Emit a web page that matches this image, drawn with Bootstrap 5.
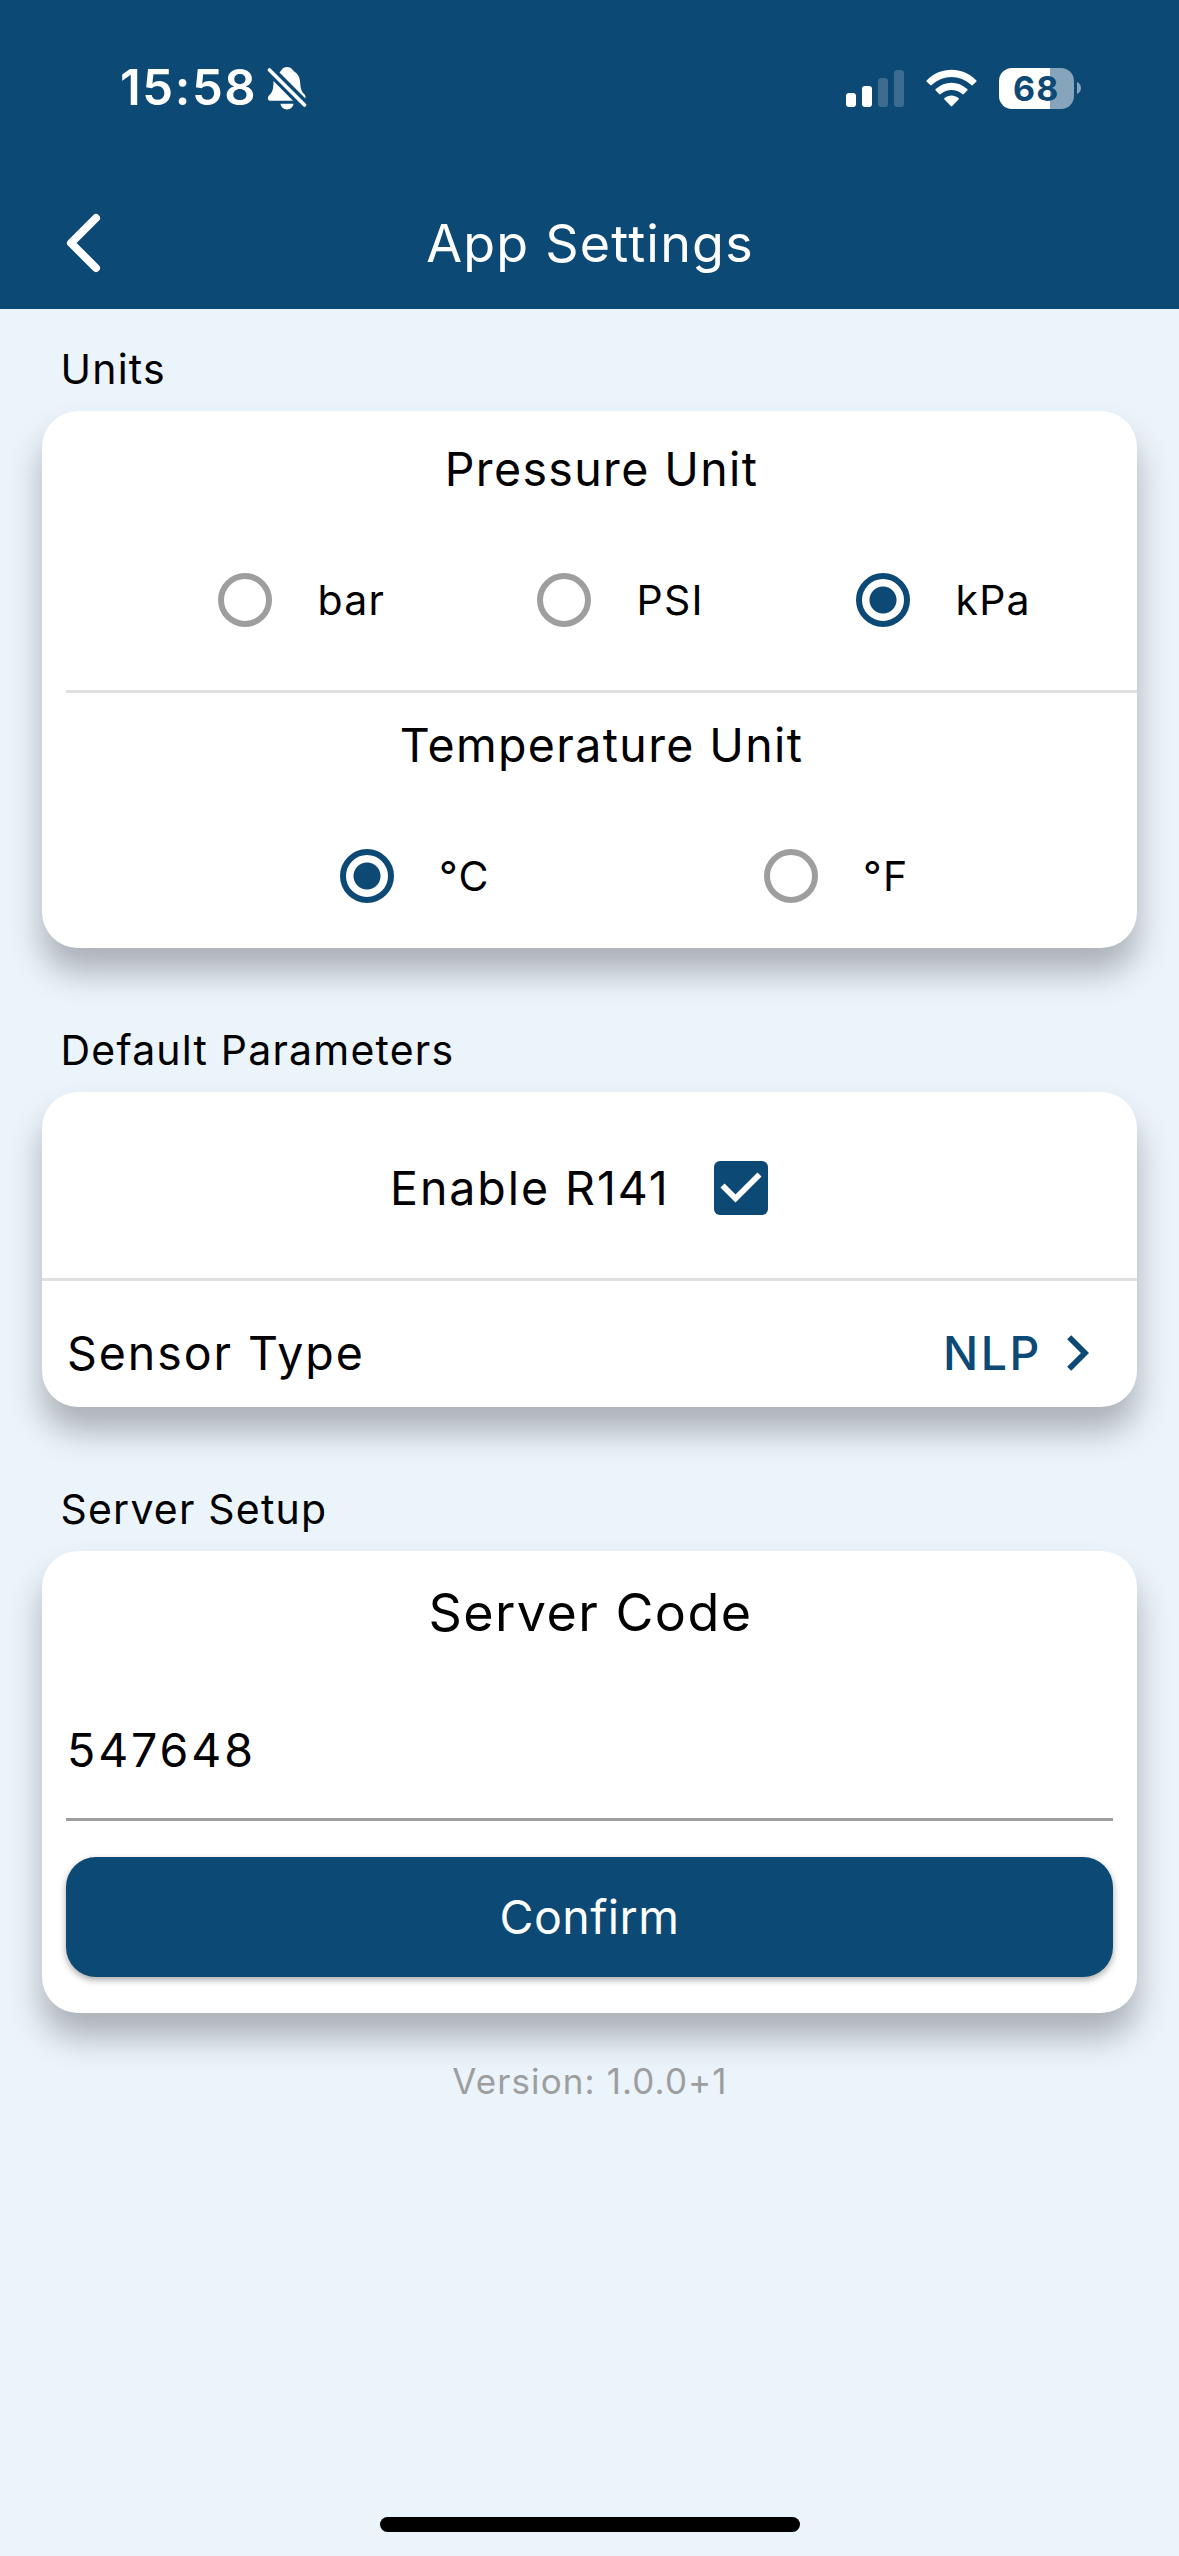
<!DOCTYPE html>
<html lang="en">
<head>
<meta charset="utf-8">
<meta name="viewport" content="width=device-width, initial-scale=1">
<title>App Settings</title>
<link href="https://cdn.jsdelivr.net/npm/bootstrap@5.3.0/dist/css/bootstrap.min.css" rel="stylesheet">
<style>
  :root { --brand: #0c4975; --line: #e0e0e0; --muted: #9e9e9e; }
  body { background: #ebf3fb; color: #000; font-family: Inter, "Liberation Sans", sans-serif; font-size: 41px; line-height: 1.2; min-height: 2556px; }
  svg { display: block; flex: none; }
  .app-head { background: var(--brand); height: 309px; }
  .status { height: 176px; padding: 0 98px 0 120px; }
  .clock { font-size: 49px; font-weight: 600; letter-spacing: 1.58px; padding-top: 1px; }
  .silent-icon { margin-left: 10px; }
  .wifi-icon { margin-left: 22px; }
  .battery { width: 75px; height: 41px; border-radius: 13px; background: linear-gradient(90deg, #fff 51px, #86a4ba 51px); color: var(--brand); font-size: 34px; font-weight: 700; letter-spacing: 1.2px; padding-left: 14px; line-height: 41px; margin-left: 22px; }
  .battery-tip { margin-left: 2px; margin-right: -2px; }
  .nav-row { height: 133px; padding-top: 4px; }
  .back-btn { left: 66px; top: 35px; }
  .nav-title { font-size: 52px; font-weight: 400; letter-spacing: 1.2px; padding-left: 1px; }
  .section-label { font-size: 41px; font-weight: 400; line-height: 84px; margin: 60px 0 0 60.5px; letter-spacing: 1.2px; }
  .section-label.top-label { margin-top: 18px; }
  .panel { margin: 0 42px; border: 0; border-radius: 36px; box-shadow: 0 24px 33px rgba(0,0,0,.275); color: #000; background: #fff; }
  .group-title { font-size: 46.5px; font-weight: 400; letter-spacing: 1.38px; margin: 0; padding-left: 24px; text-align: center; }
  .title-pressure { line-height: 116px; }
  .title-temperature { line-height: 104px; }
  .option { gap: 45.5px; letter-spacing: 1.2px; flex: none; }
  .option span { padding-top: 2px; }
  .option .form-check-input { width: 54px; height: 54px; margin: 0; border: 6px solid var(--muted); background-color: #fff; flex: none; }
  .option .form-check-input:checked { border-color: var(--brand); background-image: radial-gradient(circle, var(--brand) 13px, transparent 14px); background-size: 100% 100%; background-origin: border-box; }
  .pressure { height: 146px; padding-left: 176px; margin-bottom: 17px; }
  .pressure .option { width: 319px; }
  .temperature { height: 144px; padding-left: 297.5px; margin-top: 7px; }
  .temperature .option { width: 424px; }
  .divider { height: 3px; background: var(--line); }
  .divider-inset { margin-left: 24px; }
  .enable-row { height: 186px; padding: 6px 0 0 348px; font-size: 46.5px; letter-spacing: 1.94px; gap: 44.5px; }
  .enable-row span { padding-top: 2px; }
  .sensor-row { height: 126px; padding: 19px 48px 0 25px; font-size: 46.5px; letter-spacing: 1.95px; }
  .sensor-value { color: var(--brand); font-weight: 500; letter-spacing: 2.6px; gap: 25px; }
  .server-title { font-size: 52px; font-weight: 400; letter-spacing: 1.45px; line-height: 124px; margin: 0; padding-left: 2px; }
  .code-input, .code-input:focus { height: 146px; border: 0; border-bottom: 3px solid var(--muted); border-radius: 0; margin: 0 24px; width: auto; padding: 6px 0 0 1px; font-size: 46.5px; letter-spacing: 2.9px; color: #000; background: transparent; box-shadow: none; }
  .confirm, .confirm:hover { height: 120px; margin: 36px 24px; border: 0; border-radius: 30px; background: var(--brand); color: #fff; font-size: 46.5px; letter-spacing: .43px; padding: 2px 0 0; box-shadow: 0 3px 7px rgba(0,0,0,.34); }
  .version { margin-top: 47px; line-height: 42px; font-size: 35px; letter-spacing: 1.1px; color: var(--muted); padding-left: 1px; }
  .home-bar { width: 420px; height: 15px; border-radius: 8px; background: #000; margin-bottom: 24px; }
</style>
</head>
<body class="d-flex flex-column">
<header class="app-head text-white">
  <div class="status d-flex align-items-center">
    <span class="clock">15:58</span>
    <svg class="silent-icon" width="40" height="44" viewBox="0 0 40 44" fill="#fff">
      <path d="M12.5 6.500C14.500 5 15 1 20 1c5 0 5.500 3.500 8.500 5.500C32 9 33 13 33.300 18c.2 5 1.500 8 4.500 10.800.8.900.7 1.900.6 3.700z"/>
      <path d="M6.500 15L26 34.800H3.500C.5 34.800.2 31.500 2 29.500 4.500 27 6.500 25.500 6.500 15z"/>
      <path d="M13.500 37.800h13c-.5 3.300-3 5.700-6.500 5.700s-6-2.400-6.500-5.700z"/>
      <path d="M2.500 4L37.500 39" stroke="#fff" stroke-width="3.600" stroke-linecap="round"/>
    </svg>
    <svg class="ms-auto" width="58" height="38" viewBox="0 0 58 38" fill="#fff">
      <rect y="24" width="10" height="14" rx="3"/><rect x="16" y="17" width="10" height="21" rx="3"/>
      <g fill-opacity=".2"><rect x="32" y="9" width="10" height="29" rx="3"/><rect x="48" y="1" width="10" height="37" rx="3"/></g>
    </svg>
    <svg class="wifi-icon" width="51" height="38" viewBox="0 0 51 38" fill="#fff">
      <path d="M.8 11.200C15-2.600 36-2.600 50.200 11.200c.5.500.5 1 0 1.500l-3.400 3.400c-.5.500-1 .5-1.500 0-11.500-10.800-28.100-10.800-39.600 0-.5.500-1 .5-1.500 0L.8 12.700c-.5-.5-.5-1 0-1.500z"/>
      <path d="M9.700 20.100c9-8.600 22.600-8.600 31.600 0 .5.500.5 1 0 1.500l-3.500 3.500c-.5.500-1 .5-1.500 0-6.300-5.600-15.300-5.600-21.600 0-.5.500-1 .5-1.500 0l-3.500-3.500c-.5-.5-.5-1 0-1.500z"/>
      <path d="M18.500 29c4.100-3.400 9.900-3.400 14 0 .5.500.5 1 0 1.500l-6.300 6.500c-.5.500-.9.500-1.400 0L18.500 30.500c-.5-.5-.5-1 0-1.500z"/>
    </svg>
    <span class="battery">68</span>
    <svg class="battery-tip" width="7" height="14" viewBox="0 0 7 14"><path d="M1 1c5.300 2 5.300 10 0 12z" fill="#86a4ba"/></svg>
  </div>
  <div class="nav-row position-relative d-flex align-items-center justify-content-center">
    <a class="back-btn position-absolute" href="#" aria-label="Back"><svg width="36" height="64" viewBox="0 0 36 64"><path d="M30 7L5 32L30 57" fill="none" stroke="#fff" stroke-width="8" stroke-linecap="round" stroke-linejoin="round"/></svg></a>
    <h1 class="nav-title mb-0">App Settings</h1>
  </div>
</header>

<main class="flex-grow-1">
  <h2 class="section-label mb-0 top-label">Units</h2>
  <section class="card panel">
    <h3 class="group-title title-pressure">Pressure Unit</h3>
    <div class="pressure d-flex align-items-center">
      <label class="option d-flex align-items-center"><input class="form-check-input" type="radio" name="pressure"><span>bar</span></label>
      <label class="option d-flex align-items-center"><input class="form-check-input" type="radio" name="pressure"><span>PSI</span></label>
      <label class="option d-flex align-items-center w-auto"><input class="form-check-input" type="radio" name="pressure" checked><span>kPa</span></label>
    </div>
    <div class="divider divider-inset"></div>
    <h3 class="group-title title-temperature">Temperature Unit</h3>
    <div class="temperature d-flex align-items-center">
      <label class="option d-flex align-items-center"><input class="form-check-input" type="radio" name="temperature" checked><span>°C</span></label>
      <label class="option d-flex align-items-center w-auto"><input class="form-check-input" type="radio" name="temperature"><span>°F</span></label>
    </div>
  </section>

  <h2 class="section-label mb-0">Default Parameters</h2>
  <section class="card panel">
    <div class="enable-row d-flex align-items-center">
      <span>Enable R141</span>
      <svg width="54" height="54" viewBox="0 0 54 54"><rect width="54" height="54" rx="6" fill="#0c4975"/><path d="M8.500 24.500L21.500 37.500L45.500 13.500" fill="none" stroke="#fff" stroke-width="5.800"/></svg>
    </div>
    <div class="divider"></div>
    <div class="sensor-row d-flex align-items-center justify-content-between">
      <span>Sensor Type</span>
      <span class="sensor-value d-flex align-items-center">NLP
        <svg width="22" height="36" viewBox="0 0 22 36"><path d="M2.200 2.200L18 18L2.200 33.800" fill="none" stroke="#0c4975" stroke-width="5.800"/></svg>
      </span>
    </div>
  </section>

  <h2 class="section-label mb-0">Server Setup</h2>
  <section class="card panel">
    <h3 class="server-title text-center">Server Code</h3>
    <input class="form-control code-input" type="text" value="547648" aria-label="Server Code">
    <button class="btn confirm" type="button">Confirm</button>
  </section>
  <p class="version text-center mb-0">Version: 1.0.0+1</p>
</main>
<div class="home-bar mx-auto"></div>
<script src="https://cdn.jsdelivr.net/npm/bootstrap@5.3.0/dist/js/bootstrap.bundle.min.js"></script>
</body>
</html>
